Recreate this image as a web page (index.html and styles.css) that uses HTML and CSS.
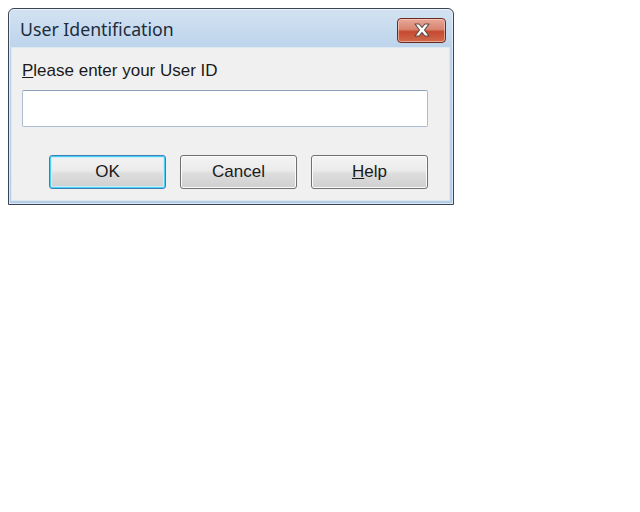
FILE: index.html
```html
<!DOCTYPE html>
<html>
<head>
<meta charset="utf-8">
<link rel="stylesheet" href="styles.css">
</head>
<body>
<div class="window">
  <div class="titlebar">
    <span class="title">User Identification</span>
    <button class="close" aria-label="Close">
      <svg width="20" height="14" viewBox="0 0 20 14">
        <path d="M3 1 L7 1 L10 4.5 L13 1 L17 1 L12.5 7 L17 13 L13 13 L10 9.5 L7 13 L3 13 L7.5 7 Z" fill="#ffffff" stroke="#5a4a48" stroke-width="1.1" stroke-linejoin="round"/>
      </svg>
    </button>
  </div>
  <div class="client">
    <label class="label" for="uid"><u>P</u>lease enter your User ID</label>
    <input id="uid" class="field" type="text">
    <div class="buttons">
      <button class="btn default">OK</button>
      <button class="btn">Cancel</button>
      <button class="btn"><u>H</u>elp</button>
    </div>
  </div>
</div>
</body>
</html>
```
FILE: styles.css
```css
html, body {
  margin: 0;
  padding: 0;
  background: #ffffff;
}
body {
  padding: 8px 0 0 8px;
}
.window {
  width: 439px;
  border: 1px solid #3a4452;
  border-radius: 6px 6px 0 0;
  background: linear-gradient(#d3e2f2, #bcd3eb 40px, #b4cde8);
  padding: 0 3px 3px 2px;
  box-shadow: inset 0 0 0 1px rgba(255,255,255,0.5);
}
.titlebar {
  height: 38px;
  display: flex;
  align-items: center;
  justify-content: space-between;
  padding: 0 4px 0 9px;
}
.title {
  font-family: "Noto Sans", sans-serif;
  font-size: 17.7px;
  color: #1e2c3c;
  margin-top: 1px;
}
.close {
  width: 49px;
  height: 25px;
  margin-top: 4px;
  border: 1px solid #6b2a20;
  border-radius: 4px;
  background: linear-gradient(#e8a898, #d98470 45%, #c54a30 55%, #d06a4c);
  box-shadow: inset 0 0 0 1px rgba(255,220,210,0.55);
  display: flex;
  align-items: center;
  justify-content: center;
  padding: 0;
}
.client {
  background: #f0f0f0;
  border: 1px solid #dfe7ef;
  height: 154px;
  padding: 0 0 0 10px;
  box-sizing: border-box;
  display: flex;
  flex-direction: column;
  align-items: flex-start;
}
.label {
  font-family: "Liberation Sans", Arial, sans-serif;
  font-size: 17px;
  color: #1a1a1a;
  margin-top: 13px;
  line-height: 20px;
}
.field {
  margin-top: 9px;
  width: 406px;
  height: 37px;
  box-sizing: border-box;
  border: 1px solid #abbdd2;
  border-top-color: #8ea4bd;
  border-radius: 2px;
  background: #ffffff;
  outline: none;
}
.buttons {
  display: flex;
  gap: 14px;
  margin-top: 28px;
  margin-left: 27px;
}
.btn {
  width: 117px;
  height: 34px;
  box-sizing: border-box;
  border: 1px solid #707070;
  border-radius: 3px;
  background: linear-gradient(#f3f3f3, #ebebeb 45%, #dddddd 55%, #cfcfcf);
  box-shadow: inset 0 0 0 1px #fbfbfb;
  font-family: "Liberation Sans", Arial, sans-serif;
  font-size: 17px;
  color: #1a1a1a;
  padding: 0;
}
.btn.default {
  border-color: #3c7fb1;
  box-shadow: inset 0 0 0 1px #48d0f8, inset 0 0 0 2px #c7ecfa;
}
```
